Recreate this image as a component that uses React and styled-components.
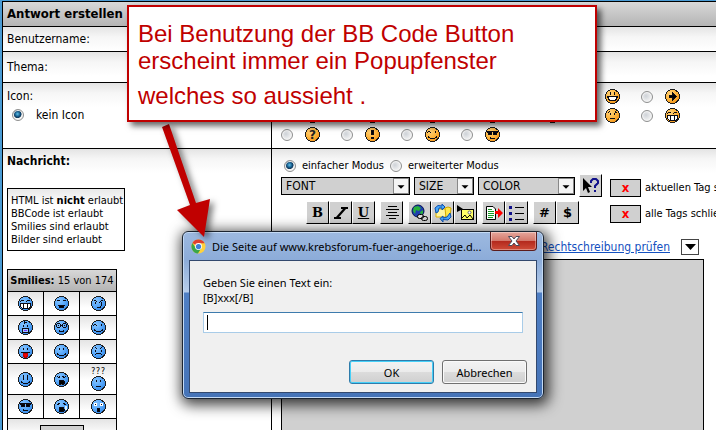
import React, { useState } from 'react';
import styled, { createGlobalStyle } from 'styled-components';

const SMILIES = [
  'grin', 'laugh', 'evil',
  'baby', 'nerd', 'wink',
  'tongue', 'smile', 'mad',
  'happy', 'yawn', 'confused',
  'cool', 'cry', 'shock',
];

const POST_ICONS = [
  'smile', 'mad', 'wink', 'cool', 'happy', 'bigsmile', 'arrow',
  'smile', 'tongue', 'evil', 'shock', 'cry', 'sad', 'grin',
  'question', 'exclamation', 'wink', 'cool',
];

const dots = <path d="M5.5 4v2M9.5 4v2" />;
const smileMouth = <path d="M3.5 9V10L5.5 11.5H9.5L11.5 10V9" />;

const faces = {
  grin: (
    <>
      <path d="M2.5 5.5L4 4.5H5L6.5 5.5M8.5 5.5L10 4.5H11L12.5 5.5" />
      <path d="M2.5 7.5H12.5V10.5L10.5 12.5H4.5L2.5 10.5Z" fill="#fff" />
      <path d="M5.5 8V12M9.5 8V12" />
    </>
  ),
  laugh: (
    <>
      <path d="M3 4.5H6M9 4.5H12" />
      <path d="M4 9H11L9 11.5H6Z" fill="#000" />
    </>
  ),
  bigsmile: (
    <>
      <path d="M5.5 3V5.5M9.5 3V5.5" />
      <path d="M2.5 7.5H12.5L10.5 11.5H4.5Z" fill="#fff" />
    </>
  ),
  evil: (
    <>
      <path d="M3.5 4L6.5 6.5M11.5 4L8.5 6.5M4.5 6V7.5M10.5 6V7.5" />
      <path d="M6 12L9 11.5L11 8.5" />
    </>
  ),
  baby: (
    <>
      <path d="M6.5 1V3L8.5 2M5.5 5V7M9.5 5V7" />
      <path d="M4.5 8.5H10.5V12.5H4.5Z" fill="#9fc4ff" />
      <path d="M6 10.5H9" stroke="#7a32ff" />
    </>
  ),
  nerd: (
    <>
      <circle cx="4.5" cy="5.5" r="2" />
      <circle cx="10.5" cy="5.5" r="2" />
      <path d="M6.5 5.5H8.5M5 10.5L6 11.5H9L10 10.5M4.5 5V6M10.5 5V6" />
    </>
  ),
  wink: (
    <>
      <path d="M2.5 5.5L4 4.5L6 5.5M10.5 4V6" />
      {smileMouth}
    </>
  ),
  tongue: (
    <>
      {dots}
      <path d="M3 8.5H12" />
      <path d="M5.5 9.5H9.5V12L8.5 13H6.5L5.5 12Z" fill="#f00000" stroke="#c00000" />
    </>
  ),
  smile: (
    <>
      {dots}
      {smileMouth}
    </>
  ),
  mad: (
    <>
      <path d="M4 3L6.5 5.5M11 3L8.5 5.5M4.5 6V7.5M10.5 6V7.5" />
      <path d="M3.5 11.5L5.5 9.5H9.5L11.5 11.5" />
    </>
  ),
  sad: (
    <>
      <path d="M3 5L5 3.5M12 5L10 3.5M5.5 5V7M9.5 5V7" />
      <path d="M4.5 11.5L5.5 10.5H9.5L10.5 11.5" />
    </>
  ),
  happy: (
    <>
      <path d="M5.5 3V8M9.5 3V8" />
      {smileMouth}
    </>
  ),
  yawn: (
    <>
      <path d="M3 4.5L4.5 5.5L6.5 4.5M8.5 4.5L10.5 5.5L12 4.5" />
      <path d="M6 8.5H9L10 9.5V11.5L9 12.5H6L5 11.5V9.5Z" fill="#000" />
      <path d="M7 12.5H8" stroke="#666" />
    </>
  ),
  confused: (
    <>
      {dots}
      <path d="M4.5 11.5L5.5 10.5H9.5L10.5 11.5" />
    </>
  ),
  cool: (
    <>
      <path d="M1 4.5H14" />
      <path d="M2.5 5H6.5V7H3.5ZM8.5 5H12.5L11.5 7H8.5Z" fill="#000" />
      <path d="M5 10.5L6 11.5H9L10.5 10.5" />
    </>
  ),
  cry: (
    <>
      <path d="M3 5.5L6 4.5M9 4.5L12 5.5" />
      <path d="M6 8.5H9L10 10V11.5L9 12.5H6L5 11.5V10Z" fill="#000" />
      <path d="M12 6.5V10.5" stroke="#d8f0ff" strokeWidth="2" />
    </>
  ),
  shock: (
    <>
      <path d="M3.5 4.5H5.5V6.5H3.5ZM9.5 4.5H11.5V6.5H9.5Z" fill="#fff" stroke="#fff" />
      <path d="M4 5.5H5M10 5.5H11" />
      <path d="M6.5 9.5H8.5V12.5H6.5Z" fill="#000" />
    </>
  ),
  arrow: <path d="M4 6.5H7.5V4L11.5 7.5L7.5 11V8.5H4Z" fill="#000" />,
  question: (
    <text x="7.5" y="11.5" textAnchor="middle" fill="#222" stroke="none">?</text>
  ),
  exclamation: <path d="M6.5 3.5H8.5V7.5H6.5ZM6.5 10.5H8.5V11.5H6.5Z" fill="#000" />,
};

function Smiley({ mood, warm }) {
  const id = warm ? 'ball-warm' : 'ball-blue';
  return (
    <Face viewBox="0 0 15 15" aria-hidden="true">
      <defs>
        <radialGradient id={id} cx="0.35" cy="0.3" r="0.8">
          <stop offset="0" stopColor={warm ? '#ffd27a' : '#86c4ff'} />
          <stop offset="0.55" stopColor={warm ? '#ffb43a' : '#55a6fa'} />
          <stop offset="1" stopColor={warm ? '#ee8d12' : '#2f83e2'} />
        </radialGradient>
      </defs>
      <g shapeRendering="crispEdges">
        <circle cx="7.5" cy="7.5" r="7" fill={`url(#${id})`} stroke="#1c1c1c" />
        <g fill="none" stroke="#0a0a14" strokeWidth="1">{faces[mood]}</g>
      </g>
    </Face>
  );
}

function ChromeLogo() {
  return (
    <Logo viewBox="0 0 16 16" aria-hidden="true">
      <circle cx="8" cy="8" r="7.5" fill="#ffd23c" />
      <path d="M8 8L1.5 4.2A7.5 7.5 0 0 1 14.5 4.4H8Z" fill="#e0402f" />
      <path d="M1.5 4.2A7.5 7.5 0 0 0 7.4 15.5L11 9.5L8 8L5 9.5Z" fill="#3ba648" />
      <circle cx="8" cy="8" r="3.7" fill="#fff" />
      <circle cx="8" cy="8" r="2.8" fill="#3f7fd6" />
    </Logo>
  );
}

const toolIcons = {
  align: <path d="M7 4.5H16M5 7.5H18M7 10.5H16M5 13.5H18M8 16.5H15" stroke="#000" />,
  link: (
    <>
      <circle cx="9" cy="9" r="6" fill="#1d3fae" stroke="#001050" />
      <path d="M5 5L9 4L12 6L10 9L7 8L6 12L4 9ZM11 10L14 8V11L12 13Z" fill="#27b03a" />
      <rect x="8.5" y="12.5" width="6" height="4" rx="2" fill="#ddd" stroke="#000" />
      <rect x="12.5" y="14.5" width="6" height="4" rx="2" fill="none" stroke="#000" />
    </>
  ),
  convert: (
    <>
      <path d="M4 7H17V15H4Z" fill="#fff6a0" stroke="#e0b400" />
      <path d="M13 6L16 5L19 6L18 15L14 16Z" fill="#ffe94a" stroke="#d0a800" />
      <path d="M4 11L3 6L6 3.5L10 4V2L13 5L10 8V6L7 6L6 10Z" fill="#4aa8f8" stroke="#0b4fb0" />
      <path d="M18 11L19 15L16 18L11 17.5V20L8 16.5L11 14V16L15 15Z" fill="#4aa8f8" stroke="#0b4fb0" />
    </>
  ),
  image: (
    <>
      <rect x="6.5" y="7.5" width="12" height="10" fill="#ffff66" stroke="#000" />
      <path d="M7 16L10 13L12 16L15 13L18 17" fill="none" stroke="#000" />
      <circle cx="14.5" cy="10.5" r="1.5" fill="#fff" stroke="#666" />
      <path d="M2 3L8 7L2 10Z" fill="#000" />
    </>
  ),
  wrap: (
    <>
      <path d="M3.5 4.5H10L12.5 7V17.5H3.5Z" fill="#fff" stroke="#000" />
      <path d="M5 7.5H9M5 9.5H11M5 11.5H11M5 13.5H11M5 15.5H10" stroke="#159a25" />
      <path d="M12 9H15V6L20 11L15 16V12H12Z" fill="#f00" />
    </>
  ),
  list: (
    <>
      <path d="M3 4H6V7H3ZM3 10H6V13H3ZM3 16H6V19H3Z" fill="#10108a" />
      <path d="M9 5.5H18M9 11.5H18M9 17.5H18" stroke="#000" />
    </>
  ),
  help: (
    <>
      <path d="M3 3V16L6 13L8 18L10 17L8 12H12Z" fill="#000" />
      <path d="M11 8V6L13 4H16L18 6V8L15 11V13M15 15V17" fill="none" stroke="#10108a" strokeWidth="2" />
    </>
  ),
  italic: <path d="M11 5H18V7H16L9 15H11V17H4V15H6L13 7H11Z" fill="#000" />,
};

function Tool({ icon, title }) {
  return (
    <ToolButton type="button" aria-label={title}>
      <svg viewBox="0 0 21 21" width="21" height="21" fill="none">{toolIcons[icon]}</svg>
    </ToolButton>
  );
}

function Picker({ label, width }) {
  return (
    <PickerBox $width={width}>
      <select aria-label={label}>
        <option>{label}</option>
      </select>
      <svg viewBox="0 0 16 16" aria-hidden="true">
        <path d="M4 7H12L8 11Z" fill="#000" />
      </svg>
    </PickerBox>
  );
}

function Radio({ label, ...rest }) {
  return (
    <RadioLabel>
      <RadioDot type="radio" {...rest} />
      {label}
    </RadioLabel>
  );
}

function PromptDialog() {
  const [text, setText] = useState('');
  return (
    <Dialog role="dialog" aria-labelledby="prompt-title">
      <TitleBar>
        <ChromeLogo />
        <DialogTitle id="prompt-title">
          Die Seite auf www.krebsforum-fuer-angehoerige.d...
        </DialogTitle>
        <CloseButton type="button" aria-label="Schließen">
          <svg viewBox="0 0 14 12" width="14" height="12">
            <path
              d="M1.5 1.5H5L7 4L9 1.5H12.5L9 6L12.5 10.5H9L7 8L5 10.5H1.5L5 6Z"
              fill="#fff"
              stroke="#4a4a5a"
            />
          </svg>
        </CloseButton>
      </TitleBar>
      <DialogBody>
        <label htmlFor="prompt-text">
          Geben Sie einen Text ein:
          <br />
          [B]xxx[/B]
        </label>
        <PromptField>
          <input id="prompt-text" value={text} onChange={(e) => setText(e.target.value)} />
          {text === '' && <Caret />}
        </PromptField>
        <Actions>
          <DialogButton type="button" $primary>OK</DialogButton>
          <DialogButton type="button">Abbrechen</DialogButton>
        </Actions>
      </DialogBody>
    </Dialog>
  );
}

export default function App() {
  const [icon, setIcon] = useState('none');
  const [mode, setMode] = useState('simple');

  return (
    <Page>
      <GlobalStyle />
      <Sheet>
        <Header>Antwort erstellen</Header>
        <Row $height={25}>
          <Cell $center>Benutzername:</Cell>
          <Cell />
        </Row>
        <Row $height={31}>
          <Cell $center>Thema:</Cell>
          <Cell />
        </Row>
        <Row $height={66}>
          <IconCell>
            <span>Icon:</span>
            <Radio
              label="kein Icon"
              name="icon"
              checked={icon === 'none'}
              onChange={() => setIcon('none')}
            />
          </IconCell>
          <Cell>
            <IconGrid>
              {POST_ICONS.map((name, index) => (
                <IconChoice key={index}>
                  <RadioDot
                    type="radio"
                    name="icon"
                    aria-label={name}
                    checked={icon === index}
                    onChange={() => setIcon(index)}
                  />
                  <Smiley mood={name} warm />
                </IconChoice>
              ))}
            </IconGrid>
          </Cell>
        </Row>
        <Row>
          <MessageCell>
            <strong>Nachricht:</strong>
            <Rules>
              <li>HTML ist <b>nicht</b> erlaubt</li>
              <li>BBCode ist erlaubt</li>
              <li>Smilies sind erlaubt</li>
              <li>Bilder sind erlaubt</li>
            </Rules>
            <SmileyBox>
              <SmileyTitle><b>Smilies:</b> 15 von 174</SmileyTitle>
              {SMILIES.map((name) => (
                <SmileyButton key={name} type="button" aria-label={name}>
                  {name === 'confused' && <Marks>???</Marks>}
                  <Smiley mood={name} />
                </SmileyButton>
              ))}
              <MoreCell>
                <MoreButton type="button">mehr</MoreButton>
              </MoreCell>
            </SmileyBox>
          </MessageCell>
          <EditorCell>
            <Modes>
              <Radio
                label="einfacher Modus"
                name="mode"
                checked={mode === 'simple'}
                onChange={() => setMode('simple')}
              />
              <Radio
                label="erweiterter Modus"
                name="mode"
                checked={mode === 'advanced'}
                onChange={() => setMode('advanced')}
              />
            </Modes>
            <Toolbars>
              <div>
                <Pickers>
                  <Picker label="FONT" width={129} />
                  <Picker label="SIZE" width={60} />
                  <Picker label="COLOR" width={97} />
                  <Tool icon="help" title="Hilfe" />
                </Pickers>
                <Tools>
                  <ToolGroup>
                    <ToolButton type="button">B</ToolButton>
                    <Tool icon="italic" title="Kursiv" />
                    <ToolButton type="button"><u>U</u></ToolButton>
                  </ToolGroup>
                  <ToolGroup>
                    <Tool icon="align" title="Zentrieren" />
                  </ToolGroup>
                  <ToolGroup>
                    <Tool icon="link" title="Link" />
                    <Tool icon="convert" title="E-Mail" />
                    <Tool icon="image" title="Bild" />
                  </ToolGroup>
                  <ToolGroup>
                    <Tool icon="wrap" title="Zitat" />
                    <Tool icon="list" title="Liste" />
                  </ToolGroup>
                  <ToolGroup>
                    <ToolButton type="button" $sans>#</ToolButton>
                    <ToolButton type="button" $sans>$</ToolButton>
                  </ToolGroup>
                </Tools>
              </div>
              <Tags>
                <Tag><TagButton type="button">x</TagButton>aktuellen Tag schließen</Tag>
                <Tag><TagButton type="button">x</TagButton>alle Tags schließen</Tag>
              </Tags>
            </Toolbars>
            <SpellRow>
              <a href="#pruefen">Rechtschreibung prüfen</a>
              <SpellButton type="button" aria-label="Sprache">
                <svg viewBox="0 0 11 6" width="11" height="6"><path d="M0 0H11L5.5 6Z" /></svg>
              </SpellButton>
            </SpellRow>
            <Editor aria-label="Nachricht" />
          </EditorCell>
        </Row>
      </Sheet>

      <PromptDialog />
      <Arrow viewBox="0 0 60 125" aria-hidden="true">
        <path d="M6 5L13 2L40 81L54 77L48 115L21 88L34 83Z" />
      </Arrow>
      <Note>
        <p>Bei Benutzung der BB Code Button erscheint immer ein Popupfenster</p>
        <p>welches so aussieht .</p>
      </Note>
    </Page>
  );
}

const GlobalStyle = createGlobalStyle`
  * {
    box-sizing: border-box;
  }
  body {
    margin: 0;
    overflow: hidden;
  }
  button, select, input, textarea {
    font: inherit;
    color: inherit;
    margin: 0;
    padding: 0;
  }
`;

const Page = styled.div`
  position: relative;
  height: 100vh;
  overflow: hidden;
  padding: 1px 0 0 2px;
  background: #4a9bd4;
  color: #000;
  font-family: 'DejaVu Sans Condensed', 'DejaVu Sans', sans-serif;
  font-size: 12px;
  line-height: 16px;
`;

const Sheet = styled.form`
  min-height: 100%;
  border: 1px solid #000;
  border-width: 1px 0 0 1px;
  background: #fff;
`;

const Header = styled.div`
  height: 25px;
  padding: 4px;
  border-bottom: 1px solid #000;
  background: linear-gradient(#d8d8d8, #b4b4b4);
  font-size: 13px;
  font-weight: bold;
`;

const Row = styled.div`
  display: grid;
  grid-template-columns: 269px minmax(0, 1fr);
  min-height: ${(p) => (p.$height ? `${p.$height}px` : '0')};
  border-bottom: 1px solid #000;
`;

const Cell = styled.div`
  display: flex;
  align-items: ${(p) => (p.$center ? 'center' : 'flex-start')};
  padding: 0 4px;
  background: linear-gradient(#e4e4e4, #f6f6f6 10px, #fff 24px);
  &:first-child {
    border-right: 1px solid #000;
  }
`;

const IconCell = styled(Cell)`
  flex-direction: column;
  gap: 3px;
  padding-top: 5px;
  label {
    padding-left: 5px;
    gap: 12px;
  }
`;

const IconGrid = styled.div`
  display: grid;
  grid-template-columns: repeat(7, 60px);
  grid-auto-rows: 19px;
  padding: 4px 5px;
`;

const IconChoice = styled.label`
  display: flex;
  align-items: center;
  gap: 12px;
`;

const Face = styled.svg`
  display: block;
  width: 15px;
  height: 15px;
  font: bold 12px 'DejaVu Sans', sans-serif;
`;

const RadioLabel = styled.label`
  display: flex;
  align-items: center;
  gap: 6px;
`;

const RadioDot = styled.input`
  appearance: none;
  flex: none;
  width: 12px;
  height: 12px;
  border: 1px solid #8e8f8f;
  border-radius: 50%;
  background: radial-gradient(circle at 40% 40%, #cfd3d8, #f4f4f4 70%);
  box-shadow: inset 0 0 0 1px #f4f4f4;
  &:checked {
    background: radial-gradient(circle at 45% 40%, #5cc0ea, #0d4a78 36%, #173a58 46%, #f4f4f4 54%);
  }
`;

const MessageCell = styled(Cell)`
  flex-direction: column;
  padding: 4px;
`;

const Rules = styled.ul`
  list-style: none;
  margin: 19px 0 18px;
  padding: 5px 1px 4px 3px;
  border: 1px solid #000;
  background: linear-gradient(#e8e8e8, #fff 16px);
  font-size: 11px;
  line-height: 13px;
  white-space: nowrap;
`;

const SmileyBox = styled.div`
  display: grid;
  grid-template-columns: 35px 35px 36px;
  grid-template-rows: 21px 23px 23px 23px 30px 23px 32px;
  gap: 1px;
  border: 1px solid #000;
  background: #000;
`;

const SmileyTitle = styled.div`
  grid-column: 1 / -1;
  background: linear-gradient(#d8d8d8, #b4b4b4);
  font-size: 11px;
  line-height: 21px;
  text-align: center;
  white-space: nowrap;
`;

const SmileyButton = styled.button`
  display: flex;
  flex-direction: column;
  align-items: center;
  justify-content: center;
  border: 0;
  background: linear-gradient(#e4e4e4, #fff 16px);
`;

const Marks = styled.span`
  font: 8px/8px 'DejaVu Sans Mono', monospace;
`;

const MoreCell = styled.div`
  grid-column: 1 / -1;
  padding: 6px;
  background: linear-gradient(#e4e4e4, #fff 16px);
  text-align: center;
`;

const MoreButton = styled.button`
  width: 44px;
  height: 20px;
  border: 1px solid #000;
  background: #d0d0d0;
  font-size: 11px;
  font-weight: bold;
`;

const EditorCell = styled(Cell)`
  flex-direction: column;
  padding: 9px;
  overflow: hidden;
`;

const Modes = styled.div`
  display: flex;
  gap: 6px;
  padding-left: 3px;
  font-size: 11px;
`;

const Toolbars = styled.div`
  display: flex;
  gap: 8px;
`;

const Pickers = styled.div`
  display: flex;
  align-items: center;
  gap: 4px;
`;

const PickerBox = styled.div`
  position: relative;
  width: ${(p) => p.$width}px;
  select {
    appearance: none;
    display: block;
    width: 100%;
    height: 18px;
    padding-left: 4px;
    border: 1px solid #000;
    border-radius: 0;
    background: #d0d0d0;
    font-size: 12px;
    line-height: 16px;
  }
  svg {
    position: absolute;
    top: 1px;
    right: 1px;
    width: 16px;
    height: 16px;
    border: 1px solid #888;
    background: #f4f4f4;
    pointer-events: none;
  }
`;

const ToolButton = styled.button`
  display: flex;
  align-items: center;
  justify-content: center;
  width: 23px;
  height: 23px;
  border: 1px solid;
  border-color: #fff #000 #000 #fff;
  background: #d0d0d0;
  font-family: ${(p) => (p.$sans ? "'DejaVu Sans', sans-serif" : "'DejaVu Serif', serif")};
  font-size: 13px;
  font-weight: bold;
  line-height: 16px;
`;

const Tools = styled.div`
  display: flex;
  gap: 5px;
  padding: 4px 0 0 25px;
`;

const ToolGroup = styled.div`
  display: flex;
`;

const Tags = styled.div`
  display: flex;
  flex-direction: column;
  gap: 8px;
  padding-top: 5px;
`;

const Tag = styled.label`
  display: flex;
  align-items: center;
  gap: 4px;
  font-size: 11px;
  white-space: nowrap;
`;

const TagButton = styled.button`
  width: 31px;
  height: 18px;
  border: 1px solid #000;
  background: #d0d0d0;
  color: #f00;
  font-size: 13px;
  font-weight: bold;
  line-height: 16px;
`;

const SpellRow = styled.div`
  display: flex;
  align-items: center;
  justify-content: flex-end;
  gap: 11px;
  width: 423px;
  max-width: 100%;
  padding: 15px 5px 4px 0;
  a {
    color: #1350c0;
  }
`;

const SpellButton = styled.button`
  display: flex;
  align-items: center;
  justify-content: center;
  width: 18px;
  height: 16px;
  border: 1px solid #444;
  background: #fff;
`;

const Editor = styled.textarea`
  display: block;
  width: 423px;
  max-width: 100%;
  height: 240px;
  resize: none;
  border: 1px solid #000;
  border-radius: 0;
  background: #d0d0d0;
`;

const Note = styled.aside`
  position: absolute;
  top: 5px;
  left: 127px;
  width: 470px;
  padding: 13px 9px 3px;
  border: 2px solid #c00000;
  background: #fff;
  box-shadow: 4px 4px 6px rgba(0, 0, 0, 0.6);
  color: #c00000;
  font: 24px/27px 'Liberation Sans', Arial, sans-serif;
  p {
    margin: 0 0 8px;
  }
`;

const Arrow = styled.svg`
  position: absolute;
  top: 122px;
  left: 156px;
  width: 60px;
  height: 125px;
  fill: #c00000;
  filter: drop-shadow(4px 3px 3px rgba(0, 0, 0, 0.5));
`;

const Dialog = styled.div`
  position: absolute;
  top: 231px;
  left: 182px;
  width: 362px;
  padding: 0 6px 5px;
  border: 1px solid #1c2430;
  border-radius: 6px;
  background: linear-gradient(#9db9e0, #8cacd9 28px, #b7cdea 60px, #4f7fc4 61px, #4674b8);
  box-shadow: inset 0 0 0 1px #c4daf4, 2px 3px 14px 3px rgba(0, 0, 0, 0.75);
  font-family: 'Noto Sans', 'Open Sans', sans-serif;
  font-size: 11px;
  line-height: 15px;
`;

const TitleBar = styled.div`
  display: flex;
  align-items: center;
  gap: 6px;
  height: 28px;
  padding-left: 2px;
`;

const Logo = styled.svg`
  flex: none;
  width: 15px;
  height: 15px;
`;

const DialogTitle = styled.span`
  flex: 1;
  white-space: nowrap;
`;

const CloseButton = styled.button`
  display: flex;
  align-items: center;
  justify-content: center;
  align-self: flex-start;
  width: 47px;
  height: 19px;
  border: 1px solid #5c1c1c;
  border-top: 0;
  border-radius: 0 0 4px 4px;
  background: linear-gradient(#e6a79c, #d3776a 9px, #b3281c 9px, #cf4c38);
  box-shadow: inset 0 0 0 1px rgba(255, 255, 255, 0.35);
`;

const DialogBody = styled.div`
  padding: 14px 9px 8px 13px;
  border: 1px solid #33496e;
  background: #f0f0f0;
`;

const PromptField = styled.div`
  position: relative;
  margin: 7px 4px 27px 0;
  input {
    display: block;
    width: 100%;
    height: 21px;
    padding: 0 4px;
    border: 1px solid #a9cce8;
    border-top-color: #3d7bad;
    background: #fff;
    outline: 0;
  }
`;

const Caret = styled.span`
  position: absolute;
  top: 3px;
  left: 4px;
  width: 1px;
  height: 15px;
  background: #000;
`;

const Actions = styled.div`
  display: flex;
  justify-content: flex-end;
  gap: 8px;
`;

const DialogButton = styled.button`
  width: 85px;
  height: 24px;
  border: 1px solid ${(p) => (p.$primary ? '#2f7cab' : '#707070')};
  border-radius: 3px;
  background: linear-gradient(#f3f3f3, #ebebeb 50%, #dcdcdc 50%, #cfcfcf);
  box-shadow: inset 0 0 0 1px ${(p) => (p.$primary ? '#46d0f8' : '#fafafa')};
`;
